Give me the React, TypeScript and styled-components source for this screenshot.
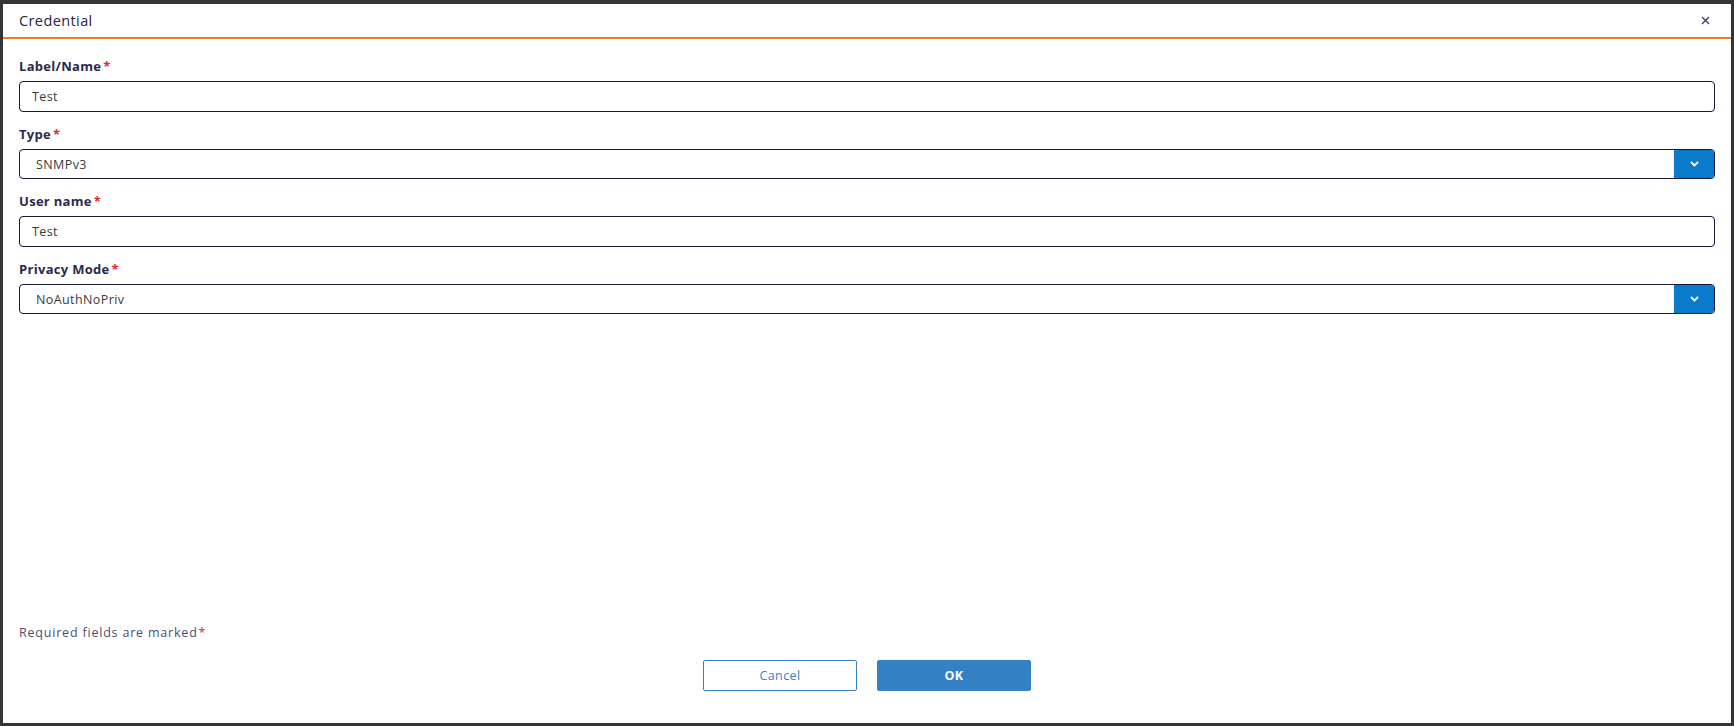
import styled, { createGlobalStyle } from "styled-components";

const GlobalStyle = createGlobalStyle`
  html, body {
    margin: 0;
    padding: 0;
    height: 100%;
    background: #353535;
    font-family: "Open Sans", "Liberation Sans", sans-serif;
  }
  #root {
    height: 100%;
  }
  * { box-sizing: border-box; }
`;

const Backdrop = styled.div`
  height: 726px;
  padding: 4px 3px 3px 3px;
  background: #353535;
`;

const Dialog = styled.div`
  height: 100%;
  background: #ffffff;
  display: flex;
  flex-direction: column;
`;

const Header = styled.div`
  height: 35px;
  border-bottom: 2px solid #e8821c;
  display: flex;
  align-items: center;
  justify-content: space-between;
  padding: 0 20px 0 16px;
  & > h1 {
    margin: 0;
    font-size: 14.5px;
    font-weight: 500;
    color: #24244a;
    letter-spacing: 0.4px;
  }
`;

const CloseBtn = styled.button`
  background: none;
  border: none;
  padding: 0;
  width: 12px;
  height: 12px;
  display: flex;
  align-items: center;
  justify-content: center;
  cursor: pointer;
  color: #3c3a6a;
`;

const Body = styled.div`
  flex: 1;
  padding: 19px 16px 0 16px;
  display: flex;
  flex-direction: column;
  gap: 14px;
`;

const Field = styled.div`
  display: flex;
  flex-direction: column;
  gap: 7px;
`;

const Label = styled.label`
  font-size: 13px;
  line-height: 16px;
  font-weight: 700;
  color: #2a2a4c;
  letter-spacing: 0.3px;
  & > span {
    color: #e02a2a;
    margin-left: 2px;
  }
`;

const Input = styled.div`
  height: 31px;
  border: 1px solid #17153c;
  border-radius: 4px;
  padding: 0 12px;
  display: flex;
  align-items: center;
  font-size: 12.5px;
  color: #3a3a3a;
  letter-spacing: 0.4px;
`;

const Select = styled.div`
  height: 30px;
  border: 1px solid #17153c;
  border-radius: 4px;
  display: flex;
  align-items: stretch;
  overflow: hidden;
  & > .value {
    flex: 1;
    padding-left: 16px;
    display: flex;
    align-items: center;
    font-size: 12.5px;
    color: #3a3a3a;
    letter-spacing: 0.4px;
  }
`;

const Caret = styled.div`
  width: 40px;
  background: #0a7bcb;
  display: flex;
  align-items: center;
  justify-content: center;
`;

const Footer = styled.div`
  padding: 0 16px 32px 16px;
  display: flex;
  flex-direction: column;
`;

const Note = styled.div`
  font-size: 12.5px;
  line-height: 16px;
  color: #4e4e6c;
  letter-spacing: 0.8px;
  & > span {
    color: #e02a2a;
    margin-left: 1px;
  }
`;

const Actions = styled.div`
  margin-top: 19px;
  display: flex;
  justify-content: center;
  gap: 20px;
`;

const Button = styled.button<{ $primary?: boolean }>`
  width: 154px;
  height: 31px;
  border-radius: 2px;
  font-family: "Open Sans", "Liberation Sans", sans-serif;
  font-size: 12.5px;
  letter-spacing: 0.4px;
  cursor: pointer;
  border: 1px solid #3a80c6;
  background: ${(p) => (p.$primary ? "#3380c4" : "#ffffff")};
  color: ${(p) => (p.$primary ? "#ffffff" : "#3a80c6")};
  font-weight: ${(p) => (p.$primary ? 700 : 400)};
`;

const Chevron = () => (
  <svg width="9" height="6" viewBox="0 0 9 6">
    <path d="M1 1 L4.5 4.5 L8 1" fill="none" stroke="#ffffff" strokeWidth="1.8" />
  </svg>
);

const App = () => {
  return (
    <>
      <GlobalStyle />
      <Backdrop>
        <Dialog>
          <Header>
            <h1>Credential</h1>
            <CloseBtn>
              <svg width="9" height="9" viewBox="0 0 9 9">
                <path d="M1 1 L8 8 M8 1 L1 8" stroke="currentColor" strokeWidth="1.3" />
              </svg>
            </CloseBtn>
          </Header>
          <Body>
            <Field>
              <Label>Label/Name<span>*</span></Label>
              <Input>Test</Input>
            </Field>
            <Field>
              <Label>Type<span>*</span></Label>
              <Select>
                <div className="value">SNMPv3</div>
                <Caret><Chevron /></Caret>
              </Select>
            </Field>
            <Field>
              <Label>User name<span>*</span></Label>
              <Input>Test</Input>
            </Field>
            <Field>
              <Label>Privacy Mode<span>*</span></Label>
              <Select>
                <div className="value">NoAuthNoPriv</div>
                <Caret><Chevron /></Caret>
              </Select>
            </Field>
          </Body>
          <Footer>
            <Note>Required fields are marked<span>*</span></Note>
            <Actions>
              <Button>Cancel</Button>
              <Button $primary>OK</Button>
            </Actions>
          </Footer>
        </Dialog>
      </Backdrop>
    </>
  );
};

export default App;
